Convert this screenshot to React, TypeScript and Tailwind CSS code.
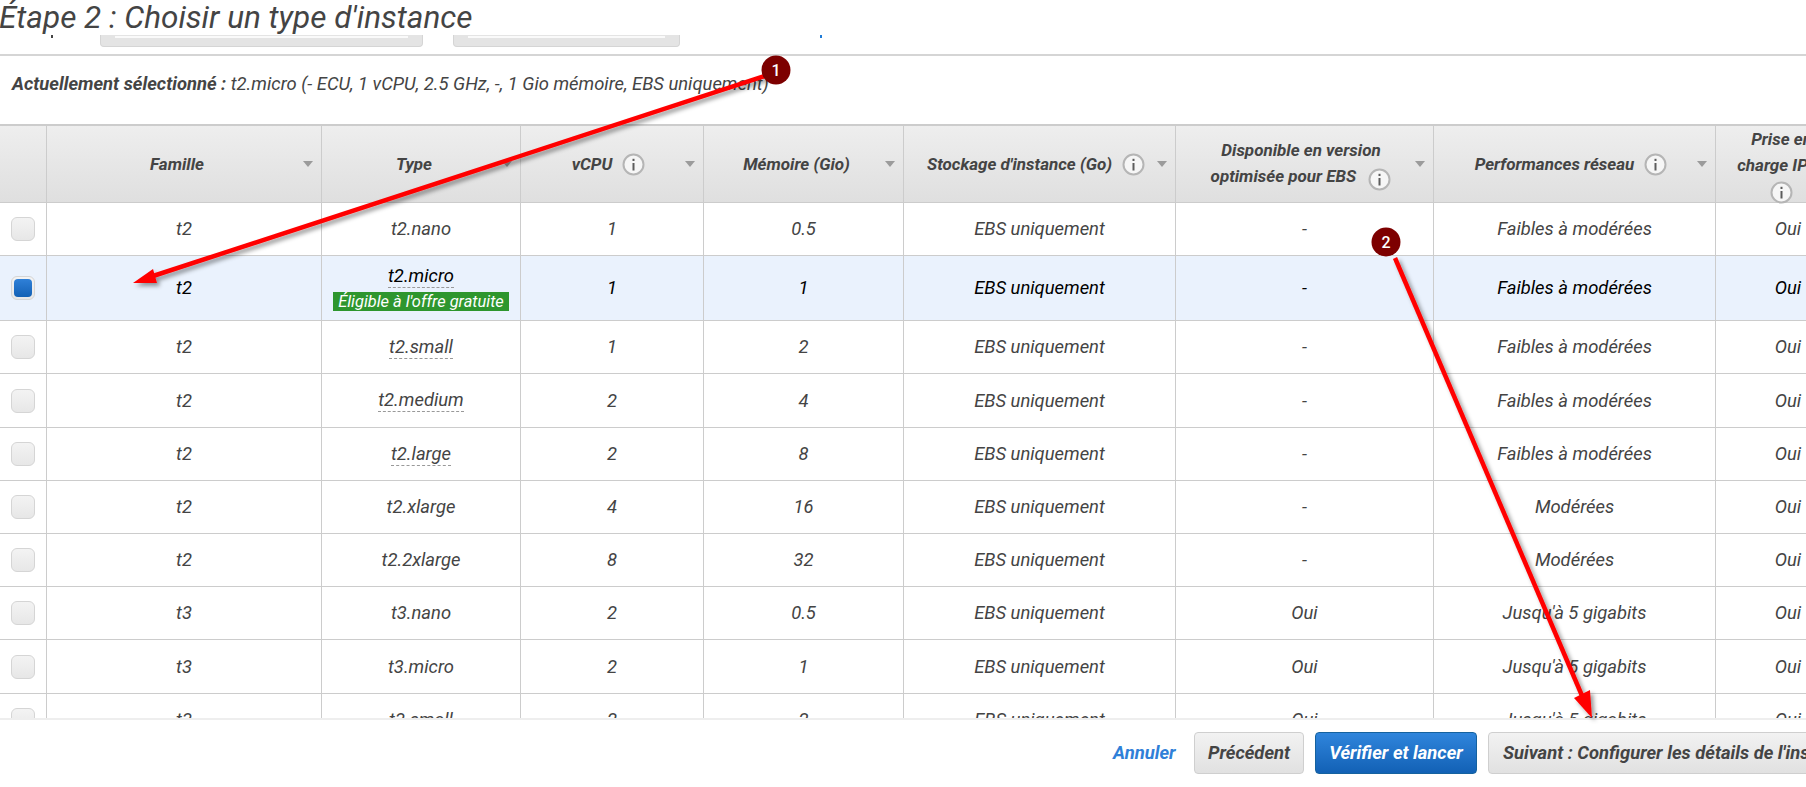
import React from "react";

interface Row {
  family: string;
  type: string;
  vcpu: string;
  mem: string;
  ebs: string;
  net: string;
  selected?: boolean;
  dotted?: boolean;
  height: string;
}

const uniq = "EBS uniquement";
const low = "Faibles à modérées";
const mid = "Modérées";
const five = "Jusqu'à 5 gigabits";

const rows: Row[] = [
  { family: "t2", type: "t2.nano", vcpu: "1", mem: "0.5", ebs: "-", net: low, height: "h-[53px]" },
  { family: "t2", type: "t2.micro", vcpu: "1", mem: "1", ebs: "-", net: low, selected: true, dotted: true, height: "h-[65px]" },
  { family: "t2", type: "t2.small", vcpu: "1", mem: "2", ebs: "-", net: low, dotted: true, height: "h-[53px]" },
  { family: "t2", type: "t2.medium", vcpu: "2", mem: "4", ebs: "-", net: low, dotted: true, height: "h-[54px]" },
  { family: "t2", type: "t2.large", vcpu: "2", mem: "8", ebs: "-", net: low, dotted: true, height: "h-[53px]" },
  { family: "t2", type: "t2.xlarge", vcpu: "4", mem: "16", ebs: "-", net: mid, height: "h-[53px]" },
  { family: "t2", type: "t2.2xlarge", vcpu: "8", mem: "32", ebs: "-", net: mid, height: "h-[53px]" },
  { family: "t3", type: "t3.nano", vcpu: "2", mem: "0.5", ebs: "Oui", net: five, height: "h-[53px]" },
  { family: "t3", type: "t3.micro", vcpu: "2", mem: "1", ebs: "Oui", net: five, height: "h-[54px]" },
  { family: "t3", type: "t3.small", vcpu: "2", mem: "2", ebs: "Oui", net: five, height: "h-[53px]" },
];

const InfoIcon = () => (
  <svg width="23" height="23" viewBox="0 0 23 23" className="inline-block shrink-0">
    <circle cx="11.5" cy="11.5" r="10" fill="#f6f6f6" stroke="#b5b5b5" strokeWidth="2" />
    <rect x="10.5" y="10" width="2" height="7.5" fill="#5c5c5c" />
    <rect x="10.5" y="5.8" width="2" height="2.2" fill="#5c5c5c" />
  </svg>
);

const Caret = () => (
  <svg width="10" height="6" viewBox="0 0 10 6" className="absolute right-2 top-1/2 -translate-y-1/2">
    <path d="M0 0h10L5 6z" fill="#9b9b9b" />
  </svg>
);

const Th = ({ w, info, children }: { w: string; info?: boolean; children: React.ReactNode }) => (
  <div className={`${w} relative shrink-0 border-r border-[#cccccc] flex items-center justify-center gap-[10px] text-center leading-[26px] whitespace-nowrap`}>
    <span>{children}</span>
    {info && <InfoIcon />}
    <Caret />
  </div>
);

const Td = ({ w, children }: { w: string; children: React.ReactNode }) => (
  <div className={`${w} shrink-0 border-r border-[#cccccc] flex flex-col items-center justify-center`}>{children}</div>
);

export default function App() {
  return (
    <div className="w-[1806px] h-[787px] overflow-hidden bg-white relative font-['Roboto',sans-serif] italic text-[#444444]">
      <h1 className="h-[35px] text-[31.5px] font-normal leading-[35px] -ml-[1px] whitespace-nowrap">Étape 2 : Choisir un type d'instance</h1>

      {/* filter buttons, clipped by the title bar */}
      <div className="h-[21px] border-b-2 border-[#d5d5d5] overflow-hidden">
        <div className="h-[12px] flex pl-[51px]">
          <div className="w-[2px] h-[3px] bg-[#444444]" />
          <div className="ml-[47px] w-[323px] h-[12px] bg-[#e4e4e4] border border-t-0 border-[#d5d5d5] rounded-b pt-[1px] px-[14px]">
            <div className="h-[2px] bg-white/80" />
          </div>
          <div className="ml-[30px] w-[227px] h-[12px] bg-[#e4e4e4] border border-t-0 border-[#d5d5d5] rounded-b pt-[1px] px-[14px]">
            <div className="h-[2px] bg-white/80" />
          </div>
          <div className="ml-[140px] w-[2px] h-[3px] bg-[#1f7cd8]" />
        </div>
      </div>

      <div className="h-[68px] pl-3 pt-[16px] text-[18.4px] leading-6 whitespace-nowrap">
        <b className="font-bold">Actuellement sélectionné :</b> t2.micro (- ECU, 1 vCPU, 2.5 GHz, -, 1 Gio mémoire, EBS uniquement)
      </div>

      {/* table */}
      <div className="w-[1860px] h-[594px] overflow-hidden">
        <div className="flex h-[79px] border-t-2 border-b border-[#cccccc] bg-gradient-to-b from-[#eeeeee] to-[#dfdfdf] text-[17px] font-bold">
          <div className="w-[47px] shrink-0 border-r border-[#cccccc]" />
          <Th w="w-[275px] pr-[14px]">Famille</Th>
          <Th w="w-[199px] pr-[14px]">Type</Th>
          <Th w="w-[183px] pr-[7px]" info>vCPU</Th>
          <Th w="w-[200px] pr-[14px]">Mémoire (Gio)</Th>
          <Th w="w-[272px] pr-[7px]" info>Stockage d'instance (Go)</Th>
          <Th w="w-[258px] pr-[7px]">
            Disponible en version<br />optimisée pour EBS <span className="inline-block align-middle ml-2"><InfoIcon /></span>
          </Th>
          <Th w="w-[282px] pr-[7px]" info>Performances réseau</Th>
          <div className="w-[144px] shrink-0 pr-[13px] text-center leading-[26px]">
            Prise en<br />charge IPv6<br /><span className="inline-block"><InfoIcon /></span>
          </div>
        </div>

        {rows.map((r) => (
          <div key={r.type} className={`flex ${r.height} border-b border-[#cccccc] text-[18.4px] ${r.selected ? "bg-[#eaf2fd] text-black" : "bg-white"}`}>
            <div className="w-[47px] shrink-0 border-r border-[#cccccc] flex items-center justify-center">
              <div className="w-6 h-6 rounded-[6px] border border-[#d5d5d5] bg-gradient-to-b from-[#f3f3f3] to-[#e7e7e7] flex items-center justify-center">
                {r.selected && <div className="w-[18px] h-[18px] rounded-[4px] bg-gradient-to-b from-[#2f80d8] to-[#1261b5]" />}
              </div>
            </div>
            <Td w="w-[275px]">{r.family}</Td>
            <Td w="w-[199px]">
              <span className={`leading-[22px] ${r.dotted ? "border-b border-dashed border-[#999999]" : ""}`}>{r.type}</span>
              {r.selected && (
                <span className="mt-[4px] bg-[#2e962e] text-white text-[16.4px] leading-[19px] px-[5px] whitespace-nowrap">Éligible à l'offre gratuite</span>
              )}
            </Td>
            <Td w="w-[183px]">{r.vcpu}</Td>
            <Td w="w-[200px]">{r.mem}</Td>
            <Td w="w-[272px]">{uniq}</Td>
            <Td w="w-[258px]">{r.ebs}</Td>
            <Td w="w-[282px]">{r.net}</Td>
            <div className="w-[144px] shrink-0 flex items-center justify-center">Oui</div>
          </div>
        ))}
      </div>

      {/* footer */}
      <div className="absolute left-0 right-0 bottom-0 h-[69px] bg-white border-t-2 border-[#eeeeee] flex items-start pt-[12px] pl-[1113px] whitespace-nowrap text-[18.4px] font-bold">
        <span className="w-[81px] shrink-0 h-[42px] leading-[42px] text-[#2f80d8]">Annuler</span>
        <button className="w-[110px] shrink-0 h-[42px] rounded border border-[#cfcfcf] bg-gradient-to-b from-[#f2f2f2] to-[#e1e1e1] italic font-bold">Précédent</button>
        <button className="ml-[11px] w-[162px] shrink-0 h-[42px] rounded border border-[#15629f] bg-gradient-to-b from-[#2f85dc] to-[#1261b5] text-white italic font-bold">Vérifier et lancer</button>
        <button className="ml-[11px] w-[460px] shrink-0 h-[42px] rounded border border-[#cfcfcf] bg-gradient-to-b from-[#f2f2f2] to-[#e1e1e1] italic font-bold text-left pl-[14px]">Suivant : Configurer les détails de l'instance</button>
      </div>

      {/* annotations */}
      <svg width="1806" height="787" className="absolute inset-0 pointer-events-none">
        <defs>
          <filter id="sh" x="-10%" y="-10%" width="120%" height="120%">
            <feDropShadow dx="3" dy="3" stdDeviation="2" floodColor="#000" floodOpacity="0.4" />
          </filter>
        </defs>
        <g filter="url(#sh)">
          <path d="M768 75 L150 277" stroke="#ff0000" strokeWidth="4.5" />
          <path d="M133 283 L153 269 L157 283 Z" fill="#ff0000" />
          <path d="M1395 258 L1583 698" stroke="#ff0000" strokeWidth="4.5" />
          <path d="M1592 718 L1574 698 L1590 690 Z" fill="#ff0000" />
        </g>
        <circle cx="776" cy="70" r="14.5" fill="#7d0000" />
        <circle cx="1386" cy="242" r="14.5" fill="#7d0000" />
        <text x="776" y="76" textAnchor="middle" fill="#fff" fontSize="16" fontWeight="500" fontStyle="normal" fontFamily="Roboto, sans-serif">1</text>
        <text x="1386" y="248" textAnchor="middle" fill="#fff" fontSize="16" fontWeight="500" fontStyle="normal" fontFamily="Roboto, sans-serif">2</text>
      </svg>
    </div>
  );
}
